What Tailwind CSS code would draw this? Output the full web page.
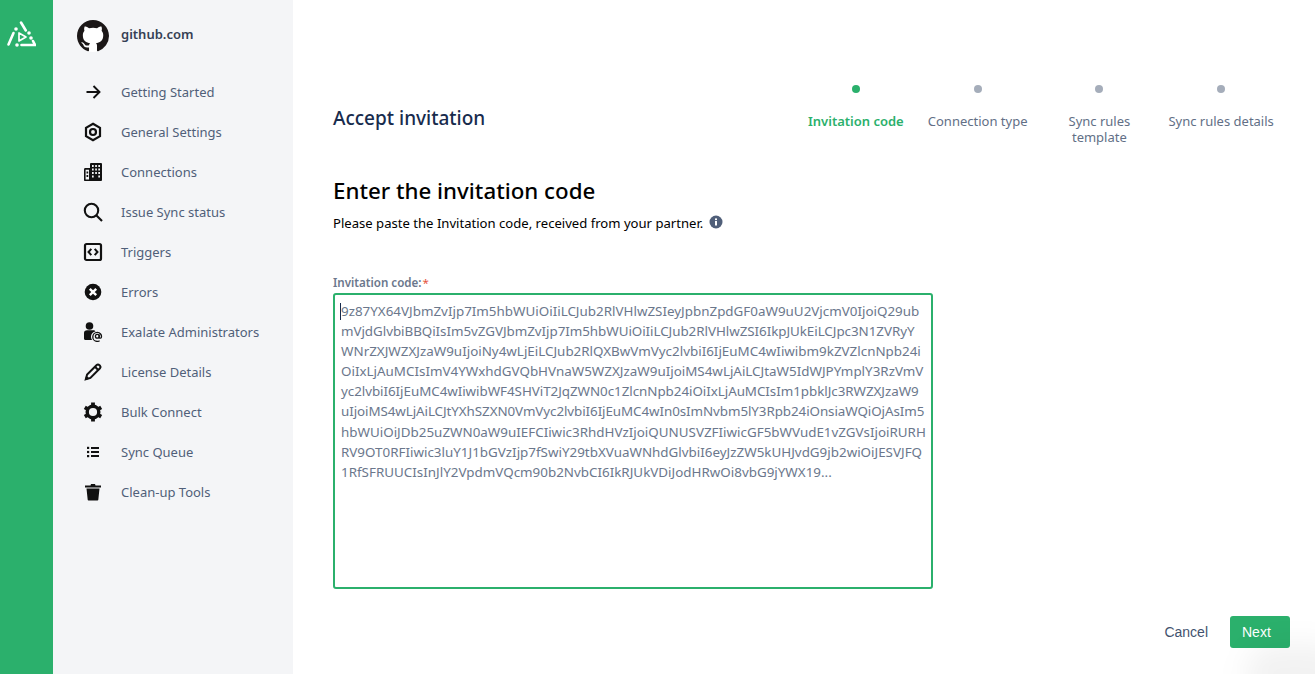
<!doctype html>
<html lang="en">
<head>
<meta charset="utf-8">
<title>Accept invitation</title>
<script src="https://cdn.jsdelivr.net/npm/@tailwindcss/browser@4"></script>
</head>
<body class="overflow-hidden bg-white font-['Noto_Sans','Open_Sans',sans-serif]">
<div class="relative flex h-[674px] w-[1315px] overflow-hidden">
  <aside class="w-[53px] shrink-0 bg-[#2bb06c] pl-[6px] pt-[20px]">
    <svg class="h-[30px] w-[30px]" viewBox="6 20 30 30" fill="none" stroke="#fff" stroke-width="2.600" stroke-linecap="round">
      <path d="M21 22.500 25.800 30.500" />
      <path d="M13.500 33 8.500 44.500" />
      <path d="M21.500 45H35L33 41" />
      <path d="M19 33v8l7-4z" stroke-width="1.700" stroke-linejoin="round" />
      <circle cx="16" cy="29" r="1.800" fill="#fff" stroke="none" />
      <circle cx="29" cy="33" r="1.800" fill="#fff" stroke="none" />
      <circle cx="31" cy="38" r="1.800" fill="#fff" stroke="none" />
      <circle cx="17" cy="45" r="1.800" fill="#fff" stroke="none" />
    </svg>
  </aside>

  <nav class="w-[240px] shrink-0 bg-[#f4f5f7]">
    <div class="flex h-[52px] items-end pl-[24px]">
      <div class="flex items-center gap-[12px]">
        <svg class="h-[32px] w-[32px]" viewBox="0 0 16 16"><circle cx="8" cy="8" r="8" fill="#fff"/><path fill="#1b1717" d="M8 0C3.58 0 0 3.58 0 8c0 3.54 2.29 6.53 5.47 7.59.4.07.55-.17.55-.38 0-.19-.01-.82-.01-1.49-2.01.37-2.53-.49-2.69-.94-.09-.23-.48-.94-.82-1.13-.28-.15-.68-.52-.01-.53.63-.01 1.08.58 1.23.82.72 1.21 1.87.87 2.33.66.07-.52.28-.87.51-1.07-1.78-.2-3.64-.89-3.64-3.95 0-.87.31-1.59.82-2.15-.08-.2-.36-1.02.08-2.12 0 0 .67-.21 2.2.82.64-.18 1.32-.27 2-.27s1.36.09 2 .27c1.53-1.04 2.2-.82 2.2-.82.44 1.1.16 1.92.08 2.12.51.56.82 1.27.82 2.15 0 3.07-1.87 3.75-3.65 3.95.29.25.54.73.54 1.48 0 1.07-.01 1.93-.01 2.2 0 .21.15.46.55.38A8.01 8.01 0 0 0 16 8c0-4.42-3.58-8-8-8z"/></svg>
        <span class="mb-[2px] text-[13px] font-semibold text-[#344054]">github.com</span>
      </div>
    </div>

    <ul class="mt-[20px] text-[13px] text-[#505f79]">
      <li class="flex h-[40px] items-center pl-[30px]">
        <svg class="mr-[18px] h-[20px] w-[20px]" viewBox="0 0 20 20" fill="none" stroke="#111" stroke-width="1.900"><path d="M3.500 10H16M10.500 4l6 6-6 6"/></svg><span class="mt-[2px]">Getting Started</span>
      </li>
      <li class="flex h-[40px] items-center pl-[30px]">
        <svg class="mr-[18px] h-[20px] w-[20px]" viewBox="0 0 20 20" fill="none" stroke="#111"><path stroke-width="2.200" d="M10 1.800 17 5.900v8.200L10 18.200 3 14.100V5.900z"/><circle cx="10" cy="10" r="3" stroke-width="2.200"/></svg><span class="mt-[2px]">General Settings</span>
      </li>
      <li class="flex h-[40px] items-center pl-[30px]">
        <svg class="mr-[18px] h-[20px] w-[20px]" viewBox="0 0 20 20">
          <rect x="7" y="1" width="12" height="18" rx="1" fill="#111"/>
          <path fill="#111" d="M1 7.500c0-.800.500-1.500 1.300-1.500H8v13H2c-.600 0-1-.400-1-1z"/>
          <path fill="#f4f5f7" d="M2.600 7.800H6v9.600H2.600zM9 3h1.700v2H9zM12.200 3h1.700v2h-1.700zM15.300 3H17v2h-1.700zM9 6.500h1.700v2H9zM12.200 6.500h1.700v2h-1.700zM15.300 6.500H17v2h-1.700zM9 10h1.700v2H9zM12.200 10h1.700v2h-1.700zM15.300 10H17v2h-1.700zM9 13.500h1.700v2H9zM15.300 13.500H17v2h-1.700z"/>
          <path fill="#111" d="M3.500 9.500h1.700v2H3.500zM3.500 13h1.700v2H3.500z"/>
        </svg><span class="mt-[2px]">Connections</span>
      </li>
      <li class="flex h-[40px] items-center pl-[30px]">
        <svg class="mr-[18px] h-[20px] w-[20px]" viewBox="0 0 20 20" fill="none" stroke="#111" stroke-width="2.100"><circle cx="8.500" cy="8.500" r="6.700"/><path d="m13.500 13.500 5.500 5.500"/></svg><span class="mt-[2px]">Issue Sync status</span>
      </li>
      <li class="flex h-[40px] items-center pl-[30px]">
        <svg class="mr-[18px] h-[20px] w-[20px]" viewBox="0 0 20 20" fill="none" stroke="#111"><rect x="2" y="2" width="16" height="16" rx="1.500" stroke-width="2.200"/><path stroke-width="2" d="M8.300 6.800 5.500 10l2.800 3.200M11.700 6.800l2.800 3.200-2.800 3.200"/></svg><span class="mt-[2px]">Triggers</span>
      </li>
      <li class="flex h-[40px] items-center pl-[30px]">
        <svg class="mr-[18px] h-[20px] w-[20px]" viewBox="0 0 20 20"><circle cx="10" cy="10" r="8.300" fill="#111"/><path stroke="#fff" stroke-width="2.400" d="m6.800 6.800 6.400 6.400m0-6.400-6.400 6.400"/></svg><span class="mt-[2px]">Errors</span>
      </li>
      <li class="flex h-[40px] items-center pl-[30px]">
        <svg class="mr-[18px] h-[20px] w-[20px]" viewBox="0 0 20 20"><circle cx="6.500" cy="4" r="3.800" fill="#111"/><path fill="#111" d="M1 11c0-2 1.200-2.800 3-2.800h6c1.300 0 2.200.4 2.500 1.300-2.700.4-4.500 2.500-4.500 5 0 1.300.4 2.600 1.200 3.500H2.500C1.500 18 1 17.400 1 16.500z"/><path fill="none" stroke="#111" stroke-width="1.300" d="M16.200 12.500v3c0 1 1.800 1 2.200-.3.500-2.200-1.300-4.800-4.100-4.800a4.500 4.500 0 0 0 0 9c.9 0 1.600-.2 2.300-.6"/><circle cx="14.300" cy="14.300" r="1.900" fill="none" stroke="#111" stroke-width="1.300"/></svg><span class="mt-[2px]">Exalate Administrators</span>
      </li>
      <li class="flex h-[40px] items-center pl-[30px]">
        <svg class="mr-[18px] h-[20px] w-[20px]" viewBox="0 0 20 20" fill="none" stroke="#111" stroke-width="2"><path d="m2.800 17.200 1.300-4.600L13.700 3c.8-.8 1.800-.8 2.500 0l.8.8c.7.700.7 1.700 0 2.500l-9.600 9.600z"/><path d="m12 4.800 3.200 3.200"/><path fill="#111" stroke="none" d="m2 18 1.200-4.500 3.300 3.300z"/></svg><span class="mt-[2px]">License Details</span>
      </li>
      <li class="flex h-[40px] items-center pl-[30px]">
        <svg class="mr-[18px] h-[20px] w-[20px]" viewBox="0 0 20 20" fill="none" stroke="#111"><circle cx="10" cy="10" r="5.800" stroke-width="3.400"/><path stroke-width="3.800" d="M10 .6v3M10 16.400v3M1.800 5.300l2.600 1.500M15.600 13.200 18.200 14.700M1.800 14.700l2.600-1.500M15.600 6.800 18.200 5.300"/></svg><span class="mt-[2px]">Bulk Connect</span>
      </li>
      <li class="flex h-[40px] items-center pl-[30px]">
        <svg class="mr-[18px] h-[20px] w-[20px]" viewBox="0 0 20 20" fill="#111"><rect x="4" y="4.800" width="2.200" height="2.200"/><rect x="4" y="8.900" width="2.200" height="2.200"/><rect x="4" y="13" width="2.200" height="2.200"/><rect x="8" y="5" width="8" height="2"/><rect x="8" y="9" width="8" height="2"/><rect x="8" y="13" width="8" height="2"/></svg><span class="mt-[2px]">Sync Queue</span>
      </li>
      <li class="flex h-[40px] items-center pl-[30px]">
        <svg class="mr-[18px] h-[20px] w-[20px]" viewBox="0 0 20 20" fill="#111"><path d="M2 3.500h5.500L8 2h4l.5 1.500H18v2H2z"/><path d="M3.500 6.500h13l-1.200 11.300c0 .4-.4.700-.8.700h-9c-.4 0-.8-.3-.8-.7z"/></svg><span class="mt-[2px]">Clean-up Tools</span>
      </li>
    </ul>
  </nav>

  <main class="flex w-[1022px] flex-col pl-[40px] pr-[33px]">
    <header class="flex items-start justify-between pt-[85px]">
      <h1 class="mt-[21px] text-[19px] leading-[24px] font-medium text-[#172b4d]">Accept invitation</h1>
      <ol class="grid w-[487px] grid-cols-4 text-center text-[13px] leading-[16px] text-[#626f86]">
        <li class="flex flex-col items-center gap-[20px]"><span class="h-[8px] w-[8px] rounded-full bg-[#2bb06c]"></span><span class="font-semibold text-[#2bb06c]">Invitation code</span></li>
        <li class="flex flex-col items-center gap-[20px]"><span class="h-[8px] w-[8px] rounded-full bg-[#a5adba]"></span><span>Connection type</span></li>
        <li class="flex flex-col items-center gap-[20px]"><span class="h-[8px] w-[8px] rounded-full bg-[#a5adba]"></span><span>Sync rules<br>template</span></li>
        <li class="flex flex-col items-center gap-[20px]"><span class="h-[8px] w-[8px] rounded-full bg-[#a5adba]"></span><span>Sync rules details</span></li>
      </ol>
    </header>

    <h2 class="mt-[31px] text-[22.300px] leading-[30px] font-medium text-black">Enter the invitation code</h2>
    <p class="mt-[8px] flex items-center gap-[6px] text-[13.100px] leading-[18px] text-black">Please paste the Invitation code, received from your partner.
      <svg class="mb-[3px] h-[14px] w-[14px]" viewBox="0 0 14 14"><circle cx="7" cy="7" r="6.500" fill="#505f79"/><rect x="6" y="6" width="2" height="4.500" fill="#fff"/><rect x="6" y="3.400" width="2" height="1.700" fill="#fff"/></svg>
    </p>

    <label class="mt-[43px] text-[11.600px] leading-[16px] font-semibold text-[#6b778c]">Invitation code:<span class="ml-[1px] font-normal text-[#e5533d]">*</span></label>
    <div class="relative mt-[2px] h-[296px] w-[600px] rounded-[3px] border-2 border-[#2bb06c] bg-white pl-[6px] pt-[6px] text-[13.400px] leading-[20.100px] whitespace-nowrap text-[#6b778c]">
      <span class="absolute left-[5px] top-[8px] h-[17px] w-px bg-[#172b4d]"></span>
      <div>9z87YX64VJbmZvIjp7Im5hbWUiOiIiLCJub2RlVHlwZSIeyJpbnZpdGF0aW9uU2VjcmV0IjoiQ29ub</div>
      <div class="tracking-[-0.05px]">mVjdGlvbiBBQiIsIm5vZGVJbmZvIjp7Im5hbWUiOiIiLCJub2RlVHlwZSI6IkpJUkEiLCJpc3N1ZVRyY</div>
      <div>WNrZXJWZXJzaW9uIjoiNy4wLjEiLCJub2RlQXBwVmVyc2lvbiI6IjEuMC4wIiwibm9kZVZlcnNpb24i</div>
      <div>OiIxLjAuMCIsImV4YWxhdGVQbHVnaW5WZXJzaW9uIjoiMS4wLjAiLCJtaW5IdWJPYmplY3RzVmV</div>
      <div class="tracking-[-0.05px]">yc2lvbiI6IjEuMC4wIiwibWF4SHViT2JqZWN0c1ZlcnNpb24iOiIxLjAuMCIsIm1pbklJc3RWZXJzaW9</div>
      <div class="tracking-[-0.08px]">uIjoiMS4wLjAiLCJtYXhSZXN0VmVyc2lvbiI6IjEuMC4wIn0sImNvbm5lY3Rpb24iOnsiaWQiOjAsIm5</div>
      <div>hbWUiOiJDb25uZWN0aW9uIEFCIiwic3RhdHVzIjoiQUNUSVZFIiwicGF5bWVudE1vZGVsIjoiRURH</div>
      <div>RV9OT0RFIiwic3luY1J1bGVzIjp7fSwiY29tbXVuaWNhdGlvbiI6eyJzZW5kUHJvdG9jb2wiOiJESVJFQ</div>
      <div>1RfSFRUUCIsInJlY2VpdmVQcm90b2NvbCI6IkRJUkVDiJodHRwOi8vbG9jYWX19...</div>
    </div>

    <div class="mt-[27px] flex items-center justify-end gap-[22px] font-['Liberation_Sans',sans-serif] text-[14px]">
      <button class="text-[#42526e]">Cancel</button>
      <button class="mr-[-8px] h-[32px] w-[60px] rounded-[3px] bg-[#2bb06c] pl-[12px] text-left text-white">Next</button>
    </div>
  </main>
  <div class="absolute right-[-30px] bottom-[-30px] h-[60px] w-[100px] rounded-full bg-black/5 blur-[14px]"></div>
</div>
</body>
</html>
